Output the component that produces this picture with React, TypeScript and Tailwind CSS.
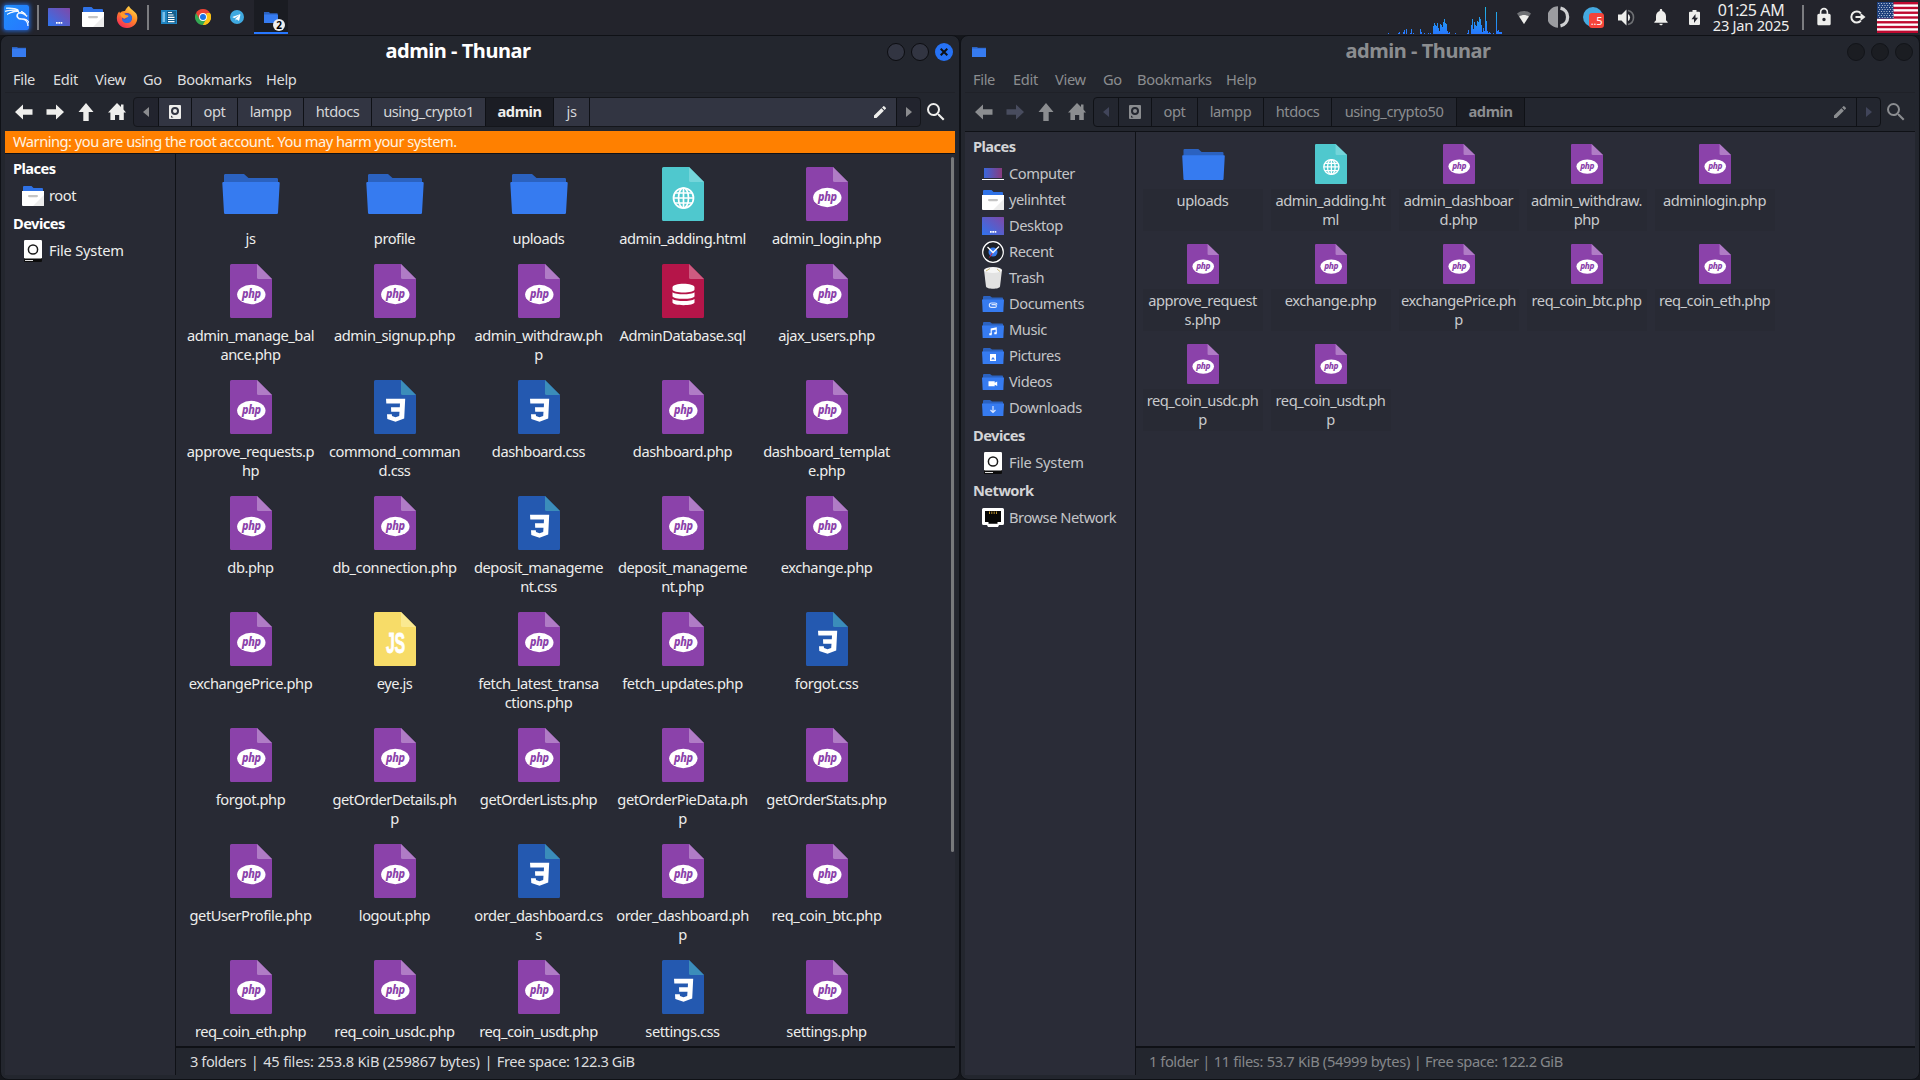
import React from "react";
import { SiKalilinux } from "react-icons/si";
import { FaTelegramPlane } from "react-icons/fa";
import { MdEdit, MdSearch, MdNotifications, MdLock } from "react-icons/md";

type Kind = "folder" | "php" | "css" | "js" | "html" | "sql";
type FileEntry = { kind: Kind; lines: string[] };

const f = (kind: Kind, ...lines: string[]): FileEntry => ({ kind, lines });

const leftRows: FileEntry[][] = [
  [f("folder", "js"), f("folder", "profile"), f("folder", "uploads"), f("html", "admin_adding.html"), f("php", "admin_login.php")],
  [f("php", "admin_manage_bal", "ance.php"), f("php", "admin_signup.php"), f("php", "admin_withdraw.ph", "p"), f("sql", "AdminDatabase.sql"), f("php", "ajax_users.php")],
  [f("php", "approve_requests.p", "hp"), f("css", "commond_comman", "d.css"), f("css", "dashboard.css"), f("php", "dashboard.php"), f("php", "dashboard_templat", "e.php")],
  [f("php", "db.php"), f("php", "db_connection.php"), f("css", "deposit_manageme", "nt.css"), f("php", "deposit_manageme", "nt.php"), f("php", "exchange.php")],
  [f("php", "exchangePrice.php"), f("js", "eye.js"), f("php", "fetch_latest_transa", "ctions.php"), f("php", "fetch_updates.php"), f("css", "forgot.css")],
  [f("php", "forgot.php"), f("php", "getOrderDetails.ph", "p"), f("php", "getOrderLists.php"), f("php", "getOrderPieData.ph", "p"), f("php", "getOrderStats.php")],
  [f("php", "getUserProfile.php"), f("php", "logout.php"), f("css", "order_dashboard.cs", "s"), f("php", "order_dashboard.ph", "p"), f("php", "req_coin_btc.php")],
  [f("php", "req_coin_eth.php"), f("php", "req_coin_usdc.php"), f("php", "req_coin_usdt.php"), f("css", "settings.css"), f("php", "settings.php")],
];

const rightRows: FileEntry[][] = [
  [f("folder", "uploads"), f("html", "admin_adding.ht", "ml"), f("php", "admin_dashboar", "d.php"), f("php", "admin_withdraw.", "php"), f("php", "adminlogin.php")],
  [f("php", "approve_request", "s.php"), f("php", "exchange.php"), f("php", "exchangePrice.ph", "p"), f("php", "req_coin_btc.php"), f("php", "req_coin_eth.php")],
  [f("php", "req_coin_usdc.ph", "p"), f("php", "req_coin_usdt.ph", "p")],
];

/* ---------- file icons ---------- */

const pageColors: Record<Exclude<Kind, "folder">, [string, string]> = {
  php: ["#8b42aa", "#b07cc6"],
  css: ["#2459b0", "#3b8dba"],
  js: ["#f7dc68", "#fae991"],
  html: ["#4fc8ce", "#74d5da"],
  sql: ["#b51549", "#cd5b80"],
};

function PageIcon({ kind, className }: { kind: Exclude<Kind, "folder">; className: string }) {
  const [body, fold] = pageColors[kind];
  return (
    <svg viewBox="0 0 42 54" preserveAspectRatio="none" className={`overflow-visible ${className}`}>
      <path d="M1.5 0H27L42 15V52.5a1.5 1.5 0 0 1-1.5 1.5H1.5A1.5 1.5 0 0 1 0 52.5V1.5A1.5 1.5 0 0 1 1.5 0z" fill={body} />
      <path d="M27 0L42 15H28.5A1.5 1.5 0 0 1 27 13.5z" fill={fold} />
      {kind === "php" && (
        <>
          <ellipse cx="21.3" cy="30.5" rx="14.2" ry="9.7" fill="#fff" />
          <text x="21.3" y="34" textAnchor="middle" textLength="18.5" lengthAdjust="spacingAndGlyphs" fontFamily="Noto Sans, sans-serif" fontSize="12.5" fontWeight="800" fontStyle="italic" fill={body}>
            php
          </text>
        </>
      )}
      {kind === "css" && <path d="M12 18.8H31.2L30.2 38.6 21.5 41.8 13.3 38.9 13 34.3H17.8L18 36 21.5 37.2 25.2 36 25.5 31.8H17.2L17 27.2H25.8L26 23.6H12.3z" fill="#fff" />}
      {kind === "js" && (
        <text x="21.5" y="40.8" textAnchor="middle" textLength="19" lengthAdjust="spacingAndGlyphs" fontFamily="Liberation Sans, sans-serif" fontSize="29" fontWeight="700" fill="#fff" stroke="#fff" strokeWidth=".8">
          JS
        </text>
      )}
      {kind === "html" && (
        <g fill="none" stroke="#fff" strokeWidth="1.7">
          <circle cx="21.5" cy="31" r="10" />
          <ellipse cx="21.5" cy="31" rx="5" ry="10" />
          <path d="M21.5 21v20M11.5 31h20M13 26h17M13 36h17" />
        </g>
      )}
      {kind === "sql" && (
        <g fill="#fff">
          <path d="M10.5 23.4C10.5 18.6 32.5 18.6 32.5 23.4V25.6C32.5 29.6 10.5 29.6 10.5 25.6z" />
          <path d="M10.5 28.2C14 31 29 31 32.5 28.2V32.2C32.5 35.6 10.5 35.6 10.5 32.2z" />
          <path d="M10.5 35C14 37.8 29 37.8 32.5 35V38.6C32.5 42 10.5 42 10.5 38.6z" />
        </g>
      )}
    </svg>
  );
}

function FolderIcon({ className }: { className: string }) {
  return (
    <svg viewBox="0 0 58 41" preserveAspectRatio="none" className={className}>
      <path d="M2 1.5A1.5 1.5 0 0 1 3.5 0H22L26.500 4H54.500A1.500 1.500 0 0 1 56 5.500V14H2z" fill="#2b62c0" />
      <path d="M1.300 8.200H56.700A1 1 0 0 1 57.700 9.200L56 39.700A1.300 1.300 0 0 1 54.700 41H3.300A1.300 1.300 0 0 1 2 39.700L.3 9.200A1 1 0 0 1 1.300 8.200z" fill="#367bf0" />
    </svg>
  );
}

/* ---------- small icons ---------- */

function DesktopIcon() {
  return (
    <svg viewBox="0 0 22 18" className="h-[18px] w-[22px] shrink-0">
      <defs>
        <linearGradient id="desk" x1="0" y1="1" x2="1" y2="0">
          <stop offset="0" stopColor="#2f74ee" />
          <stop offset="1" stopColor="#8048a8" />
        </linearGradient>
      </defs>
      <rect width="22" height="18" rx=".6" fill="url(#desk)" />
      <path d="M8 14h1.700v1.700H8zM10.300 14H12v1.700h-1.700zM12.600 14h1.700v1.700h-1.700z" fill="#fff" />
    </svg>
  );
}

function HomeFolderIcon() {
  return (
    <svg viewBox="0 0 22 20" className="h-5 w-[22px] shrink-0">
      <path d="M1 1a1 1 0 0 1 1-1h7.500l2 2H20a1 1 0 0 1 1 1v5H1z" fill="#2f72e6" />
      <path d="M0 5h22v14a1 1 0 0 1-1 1H1a1 1 0 0 1-1-1z" fill="#fff" />
      <path d="M22 9v10a1 1 0 0 1-1 1H11z" fill="#ececec" />
      <rect x="6" y="9" width="10" height="2.200" rx="1.100" fill="#c4c4c4" />
    </svg>
  );
}

function DriveIcon() {
  return (
    <svg viewBox="0 0 18 22" className="h-[22px] w-[18px] shrink-0">
      <rect y="16" width="18" height="6" rx="1" fill="#0c0c0c" />
      <path d="M1 20h8v1H1z" fill="#ddd" />
      <rect width="18" height="18.500" rx="1.200" fill="#fff" />
      <circle cx="9" cy="9.500" r="4.600" fill="none" stroke="#1a1a1a" strokeWidth="1.500" />
    </svg>
  );
}

function SideIcon({ name }: { name: string }) {
  switch (name) {
    case "computer":
      return (
        <svg viewBox="0 0 22 12" className="h-3 w-[22px]">
          <defs>
            <linearGradient id="comp" x1="0" y1="0" x2="1" y2="0">
              <stop offset="0" stopColor="#3a67dc" />
              <stop offset="1" stopColor="#8a3a7e" />
            </linearGradient>
          </defs>
          <path d="M2 0h18v10H2z" fill="url(#comp)" />
          <path d="M0 11h22v1H0z" fill="#fff" />
        </svg>
      );
    case "home":
      return <HomeFolderIcon />;
    case "desktop":
      return <DesktopIcon />;
    case "recent":
      return (
        <svg viewBox="0 0 22 22" className="size-[22px]">
          <circle cx="11" cy="11" r="10.300" fill="#1d2027" stroke="#fff" strokeWidth="1.200" />
          <circle cx="11" cy="11" r="4.500" fill="#367bf0" />
          <path d="M11 11L7.500 16.500" stroke="#d02040" strokeWidth="1" />
          <path d="M5.500 6L11 11.500 17 5.500" fill="none" stroke="#fff" strokeWidth="1.300" />
        </svg>
      );
    case "trash":
      return (
        <svg viewBox="0 0 18 22" className="h-[22px] w-[18px]">
          <path d="M0 3h18l-2 16.500C15.500 22.500 2.500 22.500 2 19.500z" fill="#e2e2e2" />
          <ellipse cx="9" cy="3" rx="9" ry="3" fill="#f6f6f6" />
          <path d="M2 4l4-2.500M13 2l3 2.500" stroke="#c9b87a" strokeWidth="1" />
        </svg>
      );
    case "drive":
      return <DriveIcon />;
    case "network":
      return (
        <svg viewBox="0 0 22 20" className="h-5 w-[22px]">
          <path d="M1.500 0h19A1.500 1.500 0 0 1 22 1.500v14a1.500 1.500 0 0 1-1.500 1.500H17l-1 2H6l-1-2H1.500A1.500 1.500 0 0 1 0 15.500v-14A1.500 1.500 0 0 1 1.500 0z" fill="#fff" />
          <path d="M3 3h16v11h-3.500v1.800h-9V14H3z" fill="#050505" />
          <path d="M7.500 3.500V6M9.800 3.500V6M12.200 3.500V6M14.500 3.500V6" stroke="#b28a2a" strokeWidth="1" />
        </svg>
      );
    default:
      return (
        <svg viewBox="0 0 22 16" className="h-4 w-[22px]">
          <path d="M1 1a1 1 0 0 1 1-1h6l2 1.600h10.500a1 1 0 0 1 .5 1V6H1z" fill="#2b62c0" />
          <path d="M0 3.500h22L21.300 16H.7z" fill="#367bf0" />
          {name === "documents" && <path d="M15 8.500c0-1-1-1.500-2-1.500H9.500a2.200 2.200 0 0 0 0 4.400H13a1.400 1.400 0 0 0 0-2.800H9.500" fill="none" stroke="#dbe7ff" strokeWidth="1.100" />}
          {name === "music" && <path d="M9.200 12V7l5-1v5M9.200 8l5-1" fill="none" stroke="#fff" strokeWidth="1.100" />}
          {name === "music" && <path d="M7.300 11.300h2.400v2H7.300zM12.300 10.300h2.400v2h-2.400z" fill="#fff" />}
          {name === "pictures" && <path d="M8 6h6v7H8zM9 11.500h4L11 9z" fill="#fff" fillRule="evenodd" />}
          {name === "videos" && <path d="M6.500 7.200h6.200v1.500l2.500-1.200v4.500l-2.500-1.200v1.500H6.500z" fill="#fff" />}
          {name === "downloads" && <path d="M11 6v6M8.500 10l2.500 2.500L13.500 10" fill="none" stroke="#dbe7ff" strokeWidth="1.200" />}
        </svg>
      );
  }
}

/* ---------- window ---------- */

type Place = { icon: string; label: string };
type Group = { title: string; items: Place[] };

function Sidebar({ groups, dim }: { groups: Group[]; dim?: boolean }) {
  return (
    <aside className={`w-[171px] shrink-0 border-r border-[#0f1116] ${dim ? "bg-[#2a2c37] text-[#c4c5c8]" : "bg-[#282a34] text-[#eeeeec]"}`}>
      {groups.map((g) => (
        <div key={g.title}>
          <div className={`flex h-[29px] items-center pl-2 font-bold tracking-[-0.55px] ${dim ? "text-[#d3d4d6]" : "text-white"}`}>{g.title}</div>
          {g.items.map((p) => (
            <div key={p.label} className="flex h-[26px] items-center pl-[17px]">
              <span className="flex w-[22px] justify-center">
                <SideIcon name={p.icon} />
              </span>
              <span className={`ml-[5px] pb-[2px] ${p.icon === "drive" ? "tracking-[-0.2px]" : ""}`}>{p.label}</span>
            </div>
          ))}
        </div>
      ))}
    </aside>
  );
}

function FileGrid({ rows, small }: { rows: FileEntry[][]; small?: boolean }) {
  return (
    <div className={`min-w-0 flex-1 overflow-hidden pt-2 pl-[3px] ${small ? "bg-[#2a2c37] text-[#c9cacd]" : "bg-[#282a34] text-[#eeeeec]"}`}>
      {rows.map((row, i) => {
        const tall = row.some((e) => e.lines.length > 1);
        const height = small ? "h-[100px]" : tall ? "h-[116px]" : "h-[97px]";
        return (
          <div key={i} className={`flex ${height}`}>
            {row.map((e, j) => (
              <div key={j} className={`flex shrink-0 flex-col items-center ${small ? "w-32" : "w-36"}`}>
                <div className={`flex items-center justify-center ${small ? "h-12" : "h-16"}`}>
                  {e.kind === "folder" ? (
                    <FolderIcon className={small ? "h-[31px] w-[43px]" : "h-[40px] w-[58px]"} />
                  ) : (
                    <PageIcon kind={e.kind} className={small ? "h-10 w-8" : "h-[54px] w-[42px]"} />
                  )}
                </div>
                <div className={`mr-px text-center leading-[19px] whitespace-nowrap ${small ? "mt-px h-[42px] w-[120px] bg-[#282a34] pt-[2px]" : "mt-[3px]"}`}>
                  {e.lines.map((l) => (
                    <div key={l}>{l}</div>
                  ))}
                </div>
              </div>
            ))}
          </div>
        );
      })}
    </div>
  );
}

type Crumb = { label: string; width: string; active?: boolean };

function Toolbar({ crumbs, dim }: { crumbs: Crumb[]; dim?: boolean }) {
  const seg = dim ? "border-[#0f1116] bg-[#23262f]" : "border-[#0f1116] bg-[#323542] border-t-[#3d404c]";
  const fg = dim ? "text-[#8b8d90]" : "text-[#eeeeec]";
  return (
    <div className={`flex h-[38px] items-center pb-px ${fg}`}>
      <svg viewBox="0 0 18 16" className="ml-[10px] h-4 w-[18px]">
        <path d="M0 8L8 .5V5.300h9.500V10.700H8v4.800z" fill="currentColor" />
      </svg>
      <svg viewBox="0 0 18 16" className={`ml-[13px] h-4 w-[18px] ${dim ? "text-[#484c5e]" : ""}`}>
        <path d="M18 8L10 .5V5.300H.5V10.700H10v4.800z" fill="currentColor" />
      </svg>
      <svg viewBox="0 0 16 18" className="ml-[14px] h-[18px] w-4">
        <path d="M8 0L15.500 9H10.700v9H5.300V9H.5z" fill="currentColor" />
      </svg>
      <svg viewBox="0 0 18 17" className="ml-[14px] h-[17px] w-[18px]">
        <path d="M9 0l4 4V1.500h2.500v5L18 9.500h-2.200V17h-4.600v-5H7v5H2.400V9.500H0z" fill="currentColor" />
      </svg>
      <div className={`ml-[7px] flex h-[30px] w-[788px] items-stretch overflow-hidden rounded-[4px] border ${dim ? "border-[#0f1116] bg-[#23262f]" : "border-[#14161b] bg-[#22242e]"}`}>
        <div className={`flex w-6 items-center justify-center ${dim ? "text-[#41455a]" : "text-[#8b8c8f]"}`}>
          <svg viewBox="0 0 6 10" className="h-[10px] w-[6px]">
            <path d="M6 0v10L0 5z" fill="currentColor" />
          </svg>
        </div>
        <div className={`flex w-[33px] items-center justify-center border-l ${seg}`}>
          <svg viewBox="0 0 12 14" className="h-[14px] w-3">
            <path d="M1 0h10a1 1 0 0 1 1 1v12a1 1 0 0 1-1 1H1a1 1 0 0 1-1-1V1a1 1 0 0 1 1-1zM6 2a4 4 0 1 0 0 8 4 4 0 0 0 0-8zM2 10.500v2h2.500z" fill="currentColor" fillRule="evenodd" />
            <circle cx="6" cy="6" r="2" fill="currentColor" />
          </svg>
        </div>
        {crumbs.map((c) => (
          <div key={c.label} className={`flex items-center justify-center border-l whitespace-nowrap ${c.width} ${c.active ? "border-[#0f1116] bg-[#1b1d24] font-bold" : `${seg} ${dim ? "" : "text-[#d5d6d8]"}`}`}>
            {c.label}
          </div>
        ))}
        <div className={`flex flex-1 items-center justify-end border-l pr-[8px] ${seg}`}>
          <MdEdit className="size-4" />
        </div>
        <div className={`flex w-6 items-center justify-center border-l border-[#0f1116] ${dim ? "text-[#41455a]" : "text-[#8b8c8f]"}`}>
          <svg viewBox="0 0 6 10" className="h-[10px] w-[6px]">
            <path d="M0 0v10l6-5z" fill="currentColor" />
          </svg>
        </div>
      </div>
      <MdSearch className="ml-[3px] size-6" />
    </div>
  );
}

const menus = [
  { label: "File", width: "w-[40px]" },
  { label: "Edit", width: "w-[42px]" },
  { label: "View", width: "w-[48px]" },
  { label: "Go", width: "w-[34px]" },
  { label: "Bookmarks", width: "w-[89px]" },
  { label: "Help", width: "w-[40px]" },
];

type Status = { folders: string; files: string; free: string };
type WindowProps = { crumbs: Crumb[]; groups: Group[]; rows: FileEntry[][]; status: Status; warning?: string; dim?: boolean };

function ThunarWindow({ crumbs, groups, rows, status, warning, dim }: WindowProps) {
  return (
    <section className={`flex h-[1045px] w-[960px] flex-col rounded-lg border border-[#0f1116] bg-[#23262e] pr-1 pb-1 pl-1 ${dim ? "text-[#8b8d90]" : "text-[#dcdddf]"}`}>
      <header className="flex h-[31px] items-center">
        <div className="flex w-20 pl-[7px]">
          <svg viewBox="0 0 14 10" className="h-[10px] w-[14px]">
            <path d="M0 0h5l1 .8h8V10H0z" fill="#2b62c0" />
            <path d="M0 1.500h14V10H0z" fill="#367bf0" />
          </svg>
        </div>
        <h1 className={`flex-1 pr-[44px] pb-[2px] text-center text-[20px] leading-6 font-bold tracking-[-0.45px] ${dim ? "text-[#8b8d90]" : "text-white"}`}>admin - Thunar</h1>
        <div className="flex w-20 justify-end gap-[6px] pr-[2px]">
          {[0, 1, 2].map((n) => (
            <span key={n} className={`flex size-[18px] items-center justify-center rounded-full ${n === 2 && !dim ? "bg-[#2672f5]" : dim ? "border border-[#121419] bg-[#1b1d22]" : "border border-[#0c0d11] bg-[#323542]"}`}>
              {n === 2 && !dim && (
                <svg viewBox="0 0 8 8" className="size-2">
                  <path d="M.7.7l6.600 6.600M7.300.7L.7 7.300" stroke="#0d1117" strokeWidth="2" />
                </svg>
              )}
            </span>
          ))}
        </div>
      </header>
      <nav className="flex h-[26px] items-center border-b border-[#1f2128] pl-2 tracking-[-0.35px]">
        {menus.map((m) => (
          <span key={m.label} className={m.width}>
            {m.label}
          </span>
        ))}
      </nav>
      <Toolbar crumbs={crumbs} dim={dim} />
      {warning && <div className="flex h-[22px] shrink-0 items-center bg-[#ff8000] pb-[2px] pl-2 tracking-[-0.49px] text-[#fff3e2]">{warning}</div>}
      <div className="flex min-h-0 flex-1 border-t border-[#0f1116]">
        <Sidebar groups={groups} dim={dim} />
        <div className="flex min-w-0 flex-1 flex-col">
          <div className="flex min-h-0 flex-1 overflow-hidden">
            <FileGrid rows={rows} small={dim} />
            {!dim && (
              <div className="flex w-[5px] justify-center bg-[#282a34] pt-[3px]">
                <div className="h-[695px] w-[3px] rounded-full bg-[#77797b]" />
              </div>
            )}
          </div>
          <footer className={`flex h-[29px] items-center border-t-2 border-[#0f1116] bg-[#23262e] ${dim ? "gap-[3.5px] pl-[13px] text-[#85878a]" : "gap-[4.5px] pl-[14px] text-[#dcdddf]"}`}>
            <span>{status.folders}</span>
            <span className="w-2 text-center">|</span>
            <span className={dim ? "tracking-[-0.32px]" : "tracking-[-0.2px]"}>{status.files}</span>
            <span className="w-2 text-center">|</span>
            <span className="tracking-[-0.4px]">{status.free}</span>
          </footer>
        </div>
      </div>
    </section>
  );
}

/* ---------- panel ---------- */

const load: [number, number][] = [
  [2, 1], [12, 1], [13, 2], [17, 2], [18, 4], [20, 5], [24, 1], [25, 5], [27, 1], [34, 5], [35, 2], [38, 1], [42, 1], [44, 1],
  [47, 8], [48, 11], [49, 9], [50, 8], [51, 11], [52, 6], [53, 3], [54, 10], [55, 9], [56, 7], [57, 12], [58, 15], [59, 11], [60, 10], [61, 3], [62, 1], [63, 2],
  [69, 1], [81, 1], [82, 4], [85, 9], [86, 15], [87, 5], [88, 12], [89, 9], [90, 8], [91, 13], [92, 12], [93, 17], [94, 15], [95, 9], [96, 2], [97, 6], [98, 3], [99, 27], [100, 13],
  [101, 3], [102, 1], [103, 2], [104, 1], [107, 1], [110, 22], [111, 3], [112, 4], [113, 2], [114, 2], [115, 2],
];

function LoadGraph() {
  return (
    <svg viewBox="0 0 116 34" className="h-[34px] w-[116px]">
      <defs>
        <linearGradient id="load" gradientUnits="userSpaceOnUse" x1="0" y1="34" x2="0" y2="6">
          <stop offset="0" stopColor="#2777ff" />
          <stop offset="1" stopColor="#1fb8e0" />
        </linearGradient>
      </defs>
      {load.map(([x, h]) => (
        <rect key={x} x={x} y={34 - h} width="1" height={h} fill="url(#load)" />
      ))}
    </svg>
  );
}

function Divider({ className }: { className: string }) {
  return <span className={`h-[25px] w-[2px] shrink-0 bg-[#7b7c80] ${className}`} />;
}

function Flag() {
  return (
    <svg viewBox="0 0 41 31" className="ml-[11px] h-[31px] w-[41px]">
      <rect width="41" height="31" fill="#fff" />
      {[0, 2, 4, 6, 8, 10, 12].map((n) => (
        <rect key={n} y={(n * 31) / 13} width="41" height={31 / 13} fill="#bf0a30" />
      ))}
      <rect width="16.500" height="16.700" fill="#1d3f7c" />
      {Array.from({ length: 8 }, (_, r) =>
        Array.from({ length: 6 }, (_, c) => <rect key={`${r}-${c}`} x={1.2 + c * 2.700 + (r % 2 ? 0.9 : 0)} y={1 + r * 2} width="1" height="1" fill="#c5cfe0" />)
      )}
    </svg>
  );
}

function Panel() {
  return (
    <div className="flex h-[35px] items-center bg-[#23242c] pb-px text-[#eeeeec]">
      <span className="ml-[4px] flex size-[25px] items-center justify-center rounded-[2px] bg-linear-to-br from-[#1f8dfa] to-[#2777ff] shadow-[0_0_4px_1px_#2268d8]">
        <SiKalilinux className="size-[24px] text-white" stroke="currentColor" strokeWidth="0.8" />
      </span>
      <Divider className="ml-2" />
      <span className="ml-[9px] flex"><DesktopIcon /></span>
      <span className="ml-3 flex"><HomeFolderIcon /></span>
      <svg viewBox="0 0 22 22" className="ml-3 size-[22px]">
        <defs>
          <linearGradient id="fox" x1=".8" y1="0" x2=".2" y2="1">
            <stop offset="0" stopColor="#ffe14d" />
            <stop offset=".45" stopColor="#ff8a26" />
            <stop offset="1" stopColor="#f5235c" />
          </linearGradient>
        </defs>
        <path d="M13 0c1 3 5 4.500 7.500 8 2.500 5.500-.5 14-9.500 14C4 22 0 16.500 1 10.500 1.300 8 2.500 6 3.200 5.500L4 7c1-1.500 3-2.200 5-2 1-2.500 2.500-4 4-5z" fill="url(#fox)" />
        <circle cx="11" cy="12" r="5" fill="#5a3fb5" />
        <path d="M7 9.500c2-2 6-2 8.500.5 1.200 3.500-.5 7-4.500 7-3 0-5-2-5-4.500 1 1 3 1.500 5-.3-1.800-.2-3-.8-4-2.700z" fill="#2f6fe0" />
        <path d="M4 7.500c2-1 4.500 0 5 1 1 1 3 .5 3.500 1.500-.5 1.500-3 1.500-3.500 2.800-2 0-4-1.500-5-5.300z" fill="#ff9a2a" />
      </svg>
      <Divider className="ml-[9px]" />
      <svg viewBox="0 0 16 14" className="ml-3 h-[14px] w-4">
        <path d="M0 0h16v14H0z" fill="#1f86c4" />
        <path d="M1.500 2h2.500v10H1.500z" fill="#7cc0ea" />
        <path d="M6 1h9v12H6z" fill="#15608f" />
        <path d="M7 2.500h4M7 5h5.500M7 7.300h6.500M7 9.500h6.500M7 11.700h6.500" stroke="#fff" strokeWidth="1.200" />
      </svg>
      <svg viewBox="0 0 16 16" className="ml-[18px] size-4">
        <path d="M8 8L1.070 4A8 8 0 0 1 14.930 4z" fill="#ea4335" />
        <path d="M8 8L1.070 4A8 8 0 0 0 8 16z" fill="#34a853" />
        <path d="M8 8l6.930-4A8 8 0 0 1 8 16z" fill="#fbc116" />
        <path d="M1.070 4L4.500 10 8 8V4.300zM8 4h6.930" fill="#ea4335" />
        <path d="M4.500 10L8 16l3.500-6z" fill="#34a853" />
        <path d="M8 16l3.500-6V4h3.430A8 8 0 0 1 8 16z" fill="#fbc116" />
        <circle cx="8" cy="8" r="3.900" fill="#fff" />
        <circle cx="8" cy="8" r="3" fill="#1a73e8" />
      </svg>
      <span className="ml-[19px] flex size-[14px] items-center justify-center rounded-full bg-[#3fa9e0]">
        <FaTelegramPlane className="mr-px size-[9px] text-white" />
      </span>
      <span className="relative ml-[10px] flex h-[34px] w-[34px] items-start justify-center border-b-2 border-[#2777ff] bg-[#1a1c22] pt-3 pr-px">
        <svg viewBox="0 0 14 11" className="mr-[-1px] h-[11px] w-[14px]">
          <path d="M0 0h5l1 1.200h7.500V11H0z" fill="#2b62c0" />
          <path d="M0 2.500h14V11H0z" fill="#367bf0" />
        </svg>
        <span className="absolute top-[19px] left-[19px] flex size-3 items-center justify-center rounded-full bg-[#eeeeee] text-[10px] leading-none font-bold text-black">2</span>
      </span>

      <span className="ml-auto flex"><LoadGraph /></span>
      <svg viewBox="0 0 14 13" className="ml-[15px] h-[13px] w-[14px]">
        <path d="M0 2.500C4-.8 10-.8 14 2.500L7 13z" fill="#6e7074" />
        <path d="M2.200 5.500C5 3.500 9 3.500 11.800 5.500L7 13z" fill="#eeeeec" />
      </svg>
      <svg viewBox="0 0 22 22" className="ml-[17px] size-[22px]">
        <path d="M10 .3a10.700 10.700 0 0 0 0 21.400z" fill="#9b9ca0" />
        <path d="M12.500 2.200a9 9 0 0 1 0 17.600" fill="none" stroke="#cfd0d2" strokeWidth="3.300" />
      </svg>
      <span className="relative ml-[13px] flex size-[20px] rounded-full bg-[#45a9e0]">
        <span className="absolute top-[6px] left-[6px] flex h-[15px] w-[15px] items-center justify-center rounded-[3px] bg-[#f4443a] text-[11px] leading-none tracking-[-0.3px] text-white">..5</span>
      </span>
      <svg viewBox="0 0 18 17" className="ml-[15px] h-[17px] w-[18px]">
        <path d="M0 5.500h3.500L8.500 0.500v16l-5-5H0z" fill="#eeeeec" />
        <path d="M10 5a4 4 0 0 1 0 7z" fill="#eeeeec" />
        <path d="M10 1.500a7.200 7.200 0 0 1 0 14" fill="none" stroke="#6e7074" strokeWidth="1.600" />
      </svg>
      <MdNotifications className="ml-[15px] size-[20px]" />
      <svg viewBox="0 0 11 15" className="ml-[18px] h-[15px] w-[11px]">
        <path d="M3.500 0h4v1.800H10a1 1 0 0 1 1 1V14a1 1 0 0 1-1 1H1a1 1 0 0 1-1-1V2.800a1 1 0 0 1 1-1h2.500zM6.500 4L2.500 9.200H5V13l4-5.200H6.500z" fill="#eeeeec" fillRule="evenodd" />
      </svg>
      <div className="ml-[8px] flex w-[86px] flex-col items-center pt-px whitespace-nowrap">
        <span className="text-[16px] leading-4 tracking-[-0.4px]">01:25 AM</span>
        <span className="text-[14.67px] leading-[15px] tracking-[-0.25px]">23 Jan 2025</span>
      </div>
      <Divider className="ml-[8px]" />
      <MdLock className="ml-[10px] size-[20px]" />
      <svg viewBox="0 0 16 14" className="ml-[16px] h-[14px] w-4">
        <path d="M10.800 3.200A5.500 5.500 0 1 0 10.800 10.800" fill="none" stroke="#eeeeec" strokeWidth="2" />
        <path d="M5.500 6h5V3l5 4-5 4V8h-5z" fill="#eeeeec" />
      </svg>
      <span className="mr-[2px] flex"><Flag /></span>
    </div>
  );
}

export default function App() {
  const path: Crumb[] = [
    { label: "opt", width: "w-[46px]" },
    { label: "lampp", width: "w-[66px]" },
    { label: "htdocs", width: "w-[68px]" },
  ];
  return (
    <div className="h-[1080px] w-[1920px] overflow-hidden bg-[#14161b] font-['Noto_Sans',sans-serif] text-[14.67px] leading-[19px] tracking-[-0.45px]">
      <Panel />
      <main className="flex">
        <ThunarWindow
          crumbs={[...path, { label: "using_crypto1", width: "w-[114px]" }, { label: "admin", width: "w-[68px]", active: true }, { label: "js", width: "w-9" }]}
          groups={[
            { title: "Places", items: [{ icon: "home", label: "root" }] },
            { title: "Devices", items: [{ icon: "drive", label: "File System" }] },
          ]}
          rows={leftRows}
          warning="Warning: you are using the root account. You may harm your system."
          status={{ folders: "3 folders", files: "45 files: 253.8 KiB (259867 bytes)", free: "Free space: 122.3 GiB" }}
        />
        <ThunarWindow
          dim
          crumbs={[...path, { label: "using_crypto50", width: "w-[125px]" }, { label: "admin", width: "w-[68px]", active: true }]}
          groups={[
            {
              title: "Places",
              items: [
                { icon: "computer", label: "Computer" },
                { icon: "home", label: "yelinhtet" },
                { icon: "desktop", label: "Desktop" },
                { icon: "recent", label: "Recent" },
                { icon: "trash", label: "Trash" },
                { icon: "documents", label: "Documents" },
                { icon: "music", label: "Music" },
                { icon: "pictures", label: "Pictures" },
                { icon: "videos", label: "Videos" },
                { icon: "downloads", label: "Downloads" },
              ],
            },
            { title: "Devices", items: [{ icon: "drive", label: "File System" }] },
            { title: "Network", items: [{ icon: "network", label: "Browse Network" }] },
          ]}
          rows={rightRows}
          status={{ folders: "1 folder", files: "11 files: 53.7 KiB (54999 bytes)", free: "Free space: 122.2 GiB" }}
        />
      </main>
    </div>
  );
}
